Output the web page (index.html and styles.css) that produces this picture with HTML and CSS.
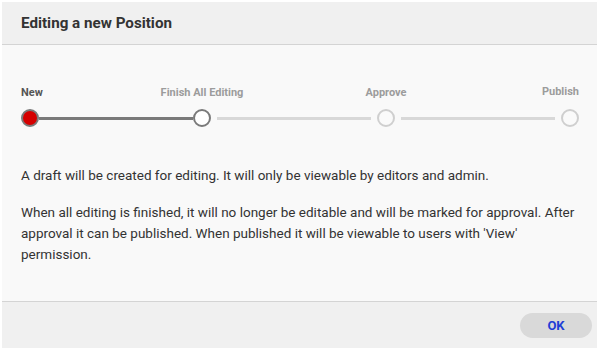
FILE: index.html
```html
<!DOCTYPE html>
<html lang="en">
<head>
    <meta charset="UTF-8">
    <title>Editing a new Position</title>
    <link rel="stylesheet" href="styles.css">
</head>
<body>

<div class="dialog">
    <div class="dialog-header">
        <h2>Editing a new Position</h2>
    </div>

    <div class="dialog-body">
        <div class="stepper">
            <div class="step-label first current"><span>New</span></div>
            <div class="spacer"></div>
            <div class="step-label"><span>Finish All Editing</span></div>
            <div class="spacer gap"></div>
            <div class="step-label"><span>Approve</span></div>
            <div class="spacer gap"></div>
            <div class="step-label last"><span>Publish</span></div>
        </div>
        <div class="stepper track">
            <div class="dot current"></div>
            <div class="line done"></div>
            <div class="dot next"></div>
            <div class="line gap"></div>
            <div class="dot"></div>
            <div class="line gap"></div>
            <div class="dot"></div>
        </div>

        <p>A draft will be created for editing. It will only be viewable by editors and admin.</p>
        <p>When all editing is finished, it will no longer be editable and will be marked for approval. After approval it can be published. When published it will be viewable to users with 'View' permission.</p>
    </div>

    <div class="dialog-footer">
        <button type="button">OK</button>
    </div>
</div>

</body>
</html>
```

FILE: styles.css
```css
body {
    margin: 0;
    padding: 2px;
    background-color: #fff;
    font-family: Roboto, "Liberation Sans", sans-serif;
    color: #333;
}

.dialog {
    width: 595px;
    background-color: #f9f9f9;
}

.dialog-header {
    height: 42px;
    display: flex;
    align-items: center;
    padding: 0 19px;
    background-color: #f0f0f0;
    border-bottom: 1px solid #d4d4d4;
}

.dialog-header h2 {
    margin: 0;
    font-size: 15.2px;
    font-weight: 700;
    color: #333;
}

.dialog-body {
    padding: 41px 18px 36px 19px;
    font-size: 13.5px;
    line-height: 21px;
    border-bottom: 1px solid #d4d4d4;
}

.dialog-body p {
    margin: 0 0 16px;
}

.dialog-body p:last-child {
    margin-bottom: 0;
}

.stepper {
    display: flex;
    align-items: center;
}

.step-label {
    width: 18px;
    display: flex;
    justify-content: center;
    white-space: nowrap;
    font-size: 11px;
    line-height: 14px;
    font-weight: 700;
    color: #9c9c9c;
}

.step-label.first {
    justify-content: flex-start;
}

.step-label.last {
    justify-content: flex-end;
    margin-top: -2px;
}

.step-label.current {
    color: #555;
}

.spacer {
    flex: 1;
}

.track {
    margin: 9px 0 38px;
}

.dot {
    width: 14px;
    height: 14px;
    border: 2px solid #cfcfcf;
    border-radius: 50%;
    background-color: #fafafa;
}

.dot.current {
    border-color: #7a7a7a;
    background-color: #d50000;
}

.dot.next {
    border-color: #7a7a7a;
    background-color: #fff;
}

.line {
    flex: 1;
    height: 3px;
    background-color: #d8d8d8;
}

.line.done {
    background-color: #7a7a7a;
}

.gap {
    margin: 0 6px;
}

.dialog-footer {
    height: 46px;
    display: flex;
    align-items: center;
    justify-content: flex-end;
    padding: 0 5px;
    background-color: #f0f0f0;
}

button {
    width: 72px;
    height: 25px;
    border: none;
    border-radius: 13px;
    background-color: #d9d9d9;
    color: #1f3fd6;
    font-family: Roboto, "Liberation Sans", sans-serif;
    font-size: 13px;
    font-weight: 700;
    cursor: pointer;
}
```
